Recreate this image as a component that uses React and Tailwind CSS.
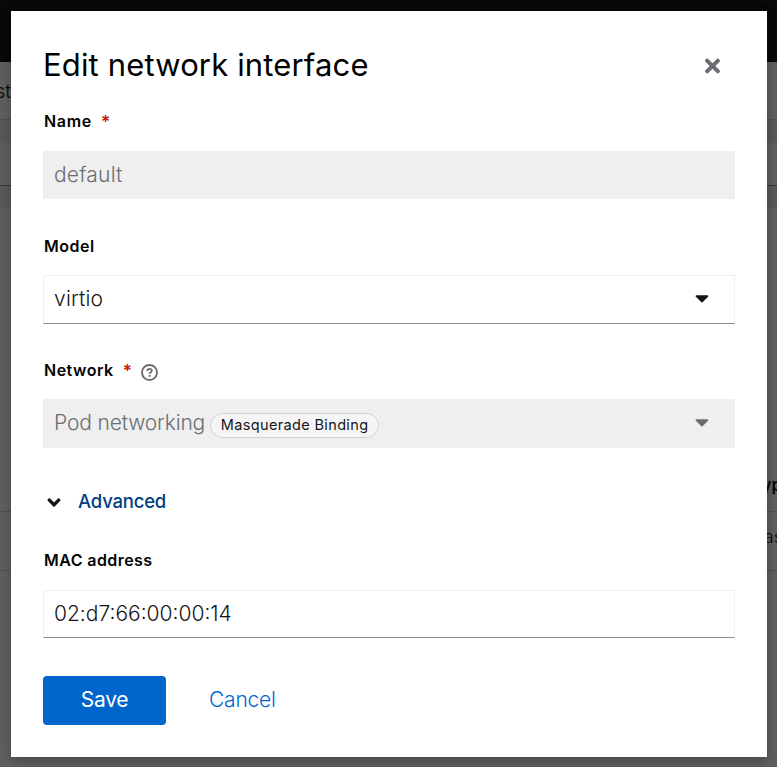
import { FaTimes, FaCaretDown, FaAngleDown } from 'react-icons/fa';

function HelpIcon() {
  return (
    <svg className="h-[17px] w-[17px]" viewBox="0 0 17 17" fill="none" stroke="#6a6e73" aria-label="Help">
      <circle cx="8.5" cy="8.5" r="7.5" strokeWidth="1.9" />
      <path d="M6.3 7.1C6.3 5.7 7.2 4.9 8.6 4.9C9.9 4.9 10.8 5.6 10.8 6.7C10.8 8.2 8.7 8.2 8.6 9.8" strokeWidth="1.9" />
      <path d="M8.6 10.9V12.8" strokeWidth="2" />
    </svg>
  );
}

function Label({ children, className, required, help }) {
  return (
    <div className="flex h-[24px] items-center pl-px text-[16px] font-semibold text-[#030303]">
      <span className="mb-[2px]"><span className={className}>{children}</span></span>
      {required && <span className="mt-[2px] ml-[9px] text-[17px] text-[#c9190b]">*</span>}
      {help && <button className="mt-[3px] ml-[9px]"><HelpIcon /></button>}
    </div>
  );
}

function Page() {
  return (
    <div className="flex h-[767px] w-full flex-col overflow-hidden bg-[#606060] text-[#080808]">
      <div className="h-[62px] bg-[#090909]" />
      <div className="flex h-[58px] items-center border-b border-[#505050]">
        <span className="-ml-[5px] text-[20px] leading-none font-light">st</span>
      </div>
      <div className="h-[23px] bg-[#5a5a5a]" />
      <div className="h-[43px] border-b border-[#363636]" />
      <div className="h-[22px] bg-[#5a5a5a]" />
      <div className="h-[253px]" />
      <div className="flex h-[51px] items-center justify-end overflow-hidden border-b border-[#505050]">
        <span className="-mr-[5px] text-[17px] font-semibold">yp</span>
      </div>
      <div className="flex h-[59px] items-center justify-end border-b border-[#505050]">
        <span className="-mr-[6px] mb-[9px] text-[18px] font-light">as</span>
      </div>
    </div>
  );
}

export default function App() {
  return (
    <div className="relative h-[767px] w-[777px] overflow-hidden font-['Inter',sans-serif]">
      <Page />
      <div
        role="dialog"
        className="absolute top-[11px] left-[11px] flex h-[746px] w-[756px] flex-col bg-white px-[32px] shadow-[0_8px_16px_rgba(3,3,3,0.16),0_0_8px_rgba(3,3,3,0.14)]"
      >
        <header className="mt-[34px] flex h-[40px] items-center justify-between">
          <h1 className="text-[31px] tracking-[0.15px] text-black">Edit network interface</h1>
          <button aria-label="Close" className="mt-px mr-[15px]">
            <FaTimes className="h-[22px] w-[15px] text-[#6a6e73]" />
          </button>
        </header>

        <div className="mt-[25px]">
          <Label className="tracking-[0.7px]" required>Name</Label>
        </div>
        <div className="mt-[17px] flex h-[48px] items-center bg-[#efefef] pl-[11px] text-[21px] font-light text-[#6a6e73]">
          <span className="tracking-[0.2px]">default</span>
        </div>

        <div className="mt-[36px]">
          <Label className="tracking-[0.5px]">Model</Label>
        </div>
        <div className="mt-[16px] flex h-[49px] items-center justify-between border border-[#efefef] border-b-[#8a8d90] pr-[25px] pl-[10px] text-[21px] font-light text-[#151515]">
          <span className="mb-[2px] tracking-[0.2px]">virtio</span>
          <FaCaretDown className="mb-[4px] h-[22px] w-[14px]" />
        </div>

        <div className="mt-[35px]">
          <Label className="tracking-[0.5px]" required help>Network</Label>
        </div>
        <div className="mt-[16px] flex h-[49px] items-center bg-[#efefef] pr-[26px] pl-[11px] text-[21px] font-light text-[#6a6e73]">
          <span className="mb-[2px] tracking-[-0.15px]">Pod networking</span>
          <span className="mt-[3px] ml-[5px] flex h-[25px] w-[169px] items-center justify-center rounded-full border border-[#d2d2d2] bg-[#f5f5f5] text-[14.5px] font-normal text-[#151515]">
            <span className="tracking-[0.35px]">Masquerade Binding</span>
          </span>
          <FaCaretDown className="mb-[4px] ml-auto h-[22px] w-[14px]" />
        </div>

        <button className="mt-[40px] flex h-[28px] items-center pl-[4px]">
          <FaAngleDown className="h-[21px] w-[14px] text-[#151515]" />
          <span className="ml-[17px] text-[18.5px] font-medium tracking-[-0.2px] text-[#004080]">Advanced</span>
        </button>

        <div className="mt-[33px]">
          <Label className="tracking-[0.43px]">MAC address</Label>
        </div>
        <div className="mt-[17px] flex h-[48px] items-center border border-[#efefef] border-b-[#8a8d90] pl-[10px] text-[21px] font-light text-[#151515]">
          <span>02:d7:66:00:00:14</span>
        </div>

        <footer className="mt-[38px] flex h-[49px] text-[21px]">
          <button className="w-[123px] rounded-[4px] bg-[#0066cc] pb-[2px] text-white">
            <span className="tracking-[-0.3px]">Save</span>
          </button>
          <button className="ml-[43px] pb-[2px] font-light text-[#0066cc]">
            <span className="tracking-[-0.2px]">Cancel</span>
          </button>
        </footer>
      </div>
    </div>
  );
}
